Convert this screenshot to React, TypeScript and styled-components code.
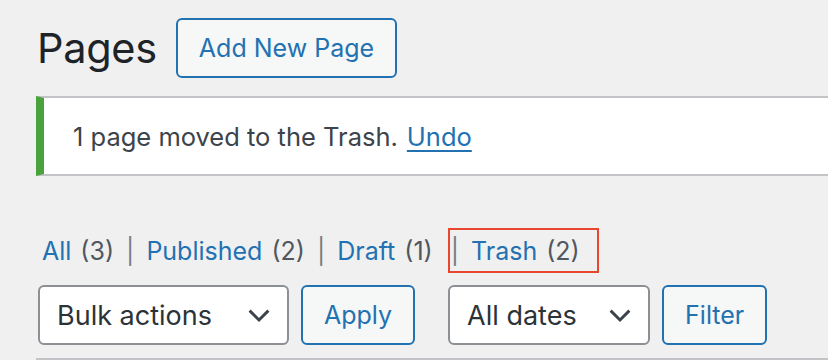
import styled, { createGlobalStyle } from "styled-components";

const GlobalStyle = createGlobalStyle`
  html, body {
    margin: 0;
    padding: 0;
    background: #f0f0f1;
    overflow: hidden;
  }
  body {
    font-family: Inter, "Noto Sans", "Liberation Sans", sans-serif;
    color: #3c434a;
  }
`;

const Wrap = styled.div`
  width: 900px;
  padding: 18px 0 0 36px;
`;

const Header = styled.div`
  display: flex;
  align-items: center;
  gap: 19px;
  height: 59px;
`;

const Title = styled.h1`
  margin: 0 0 0 1px;
  font-size: 41.5px;
  font-weight: 400;
  color: #1d2327;
  letter-spacing: -0.3px;
`;

const OutlineButton = styled.button`
  height: 60px;
  padding: 0 21px;
  border: 2px solid #2271b1;
  border-radius: 6px;
  background: #f6f7f7;
  color: #2271b1;
  font-family: inherit;
  font-size: 25px;
  box-sizing: border-box;
`;

const Notice = styled.div`
  margin-top: 19px;
  height: 80px;
  box-sizing: border-box;
  display: flex;
  align-items: center;
  padding-left: 29px;
  background: #fff;
  border-top: 2px solid #c3c4c7;
  border-bottom: 2px solid #c3c4c7;
  border-left: 8px solid #4aa23f;
  font-size: 25.5px;
  color: #3c434a;
`;

const NoticeLink = styled.a`
  margin-left: 9px;
  color: #2271b1;
  text-decoration: underline;
  text-underline-offset: 4px;
`;

const Views = styled.ul`
  list-style: none;
  display: flex;
  align-items: center;
  margin: 52px 0 0;
  padding: 0 0 0 6px;
  height: 45px;
  font-size: 25px;
  color: #50575e;
`;

const View = styled.li<{ $current?: boolean }>`
  display: flex;
  align-items: center;
  height: 45px;
  box-sizing: border-box;
  ${(p) =>
    p.$current &&
    `
    border: 2px solid #e8462f;
    margin-left: 15px;
    padding: 0 17px 0 1px;
  `}
`;

const Sep = styled.span<{ $boxed?: boolean }>`
  margin: ${(p) => (p.$boxed ? "0 12px 0 0" : "0 12px")};
  color: #787c82;
`;

const ViewLink = styled.a`
  color: #2271b1;
  text-decoration: none;
  margin-right: 9px;
`;

const Tablenav = styled.div`
  display: flex;
  align-items: center;
  margin-top: 12px;
  padding-left: 2px;
  height: 60px;
`;

const Group = styled.div`
  display: flex;
  gap: 12px;
  margin-right: 33px;
`;

const Select = styled.div<{ $w: number }>`
  width: ${(p) => p.$w}px;
  height: 60px;
  box-sizing: border-box;
  border: 2px solid #8c8f94;
  border-radius: 6px;
  background: #fff;
  display: flex;
  align-items: center;
  justify-content: space-between;
  padding: 0 13px 0 17px;
  font-size: 27px;
  color: #2c3338;
`;

const Rule = styled.div`
  margin-top: 13px;
  height: 2px;
  background: #c3c4c7;
`;

const Chevron = () => (
  <svg width="30" height="30" viewBox="0 0 24 24" fill="none">
    <path d="M4.5 8.5l7.5 7.5 7.5-7.5" stroke="#3c434a" strokeWidth="2.3" />
  </svg>
);

export default function App() {
  return (
    <>
      <GlobalStyle />
      <Wrap>
        <Header>
          <Title>Pages</Title>
          <OutlineButton>Add New Page</OutlineButton>
        </Header>
        <Notice>
          1 page moved to the Trash.<NoticeLink href="#">Undo</NoticeLink>
        </Notice>
        <Views>
          <View>
            <ViewLink href="#">All</ViewLink>(3)
          </View>
          <View>
            <Sep>|</Sep>
            <ViewLink href="#">Published</ViewLink>(2)
          </View>
          <View>
            <Sep>|</Sep>
            <ViewLink href="#">Draft</ViewLink>(1)
          </View>
          <View $current>
            <Sep $boxed>|</Sep>
            <ViewLink href="#">Trash</ViewLink>(2)
          </View>
        </Views>
        <Tablenav>
          <Group>
            <Select $w={251}>
              Bulk actions
              <Chevron />
            </Select>
            <OutlineButton>Apply</OutlineButton>
          </Group>
          <Group>
            <Select $w={202}>
              All dates
              <Chevron />
            </Select>
            <OutlineButton>Filter</OutlineButton>
          </Group>
        </Tablenav>
        <Rule />
      </Wrap>
    </>
  );
}
